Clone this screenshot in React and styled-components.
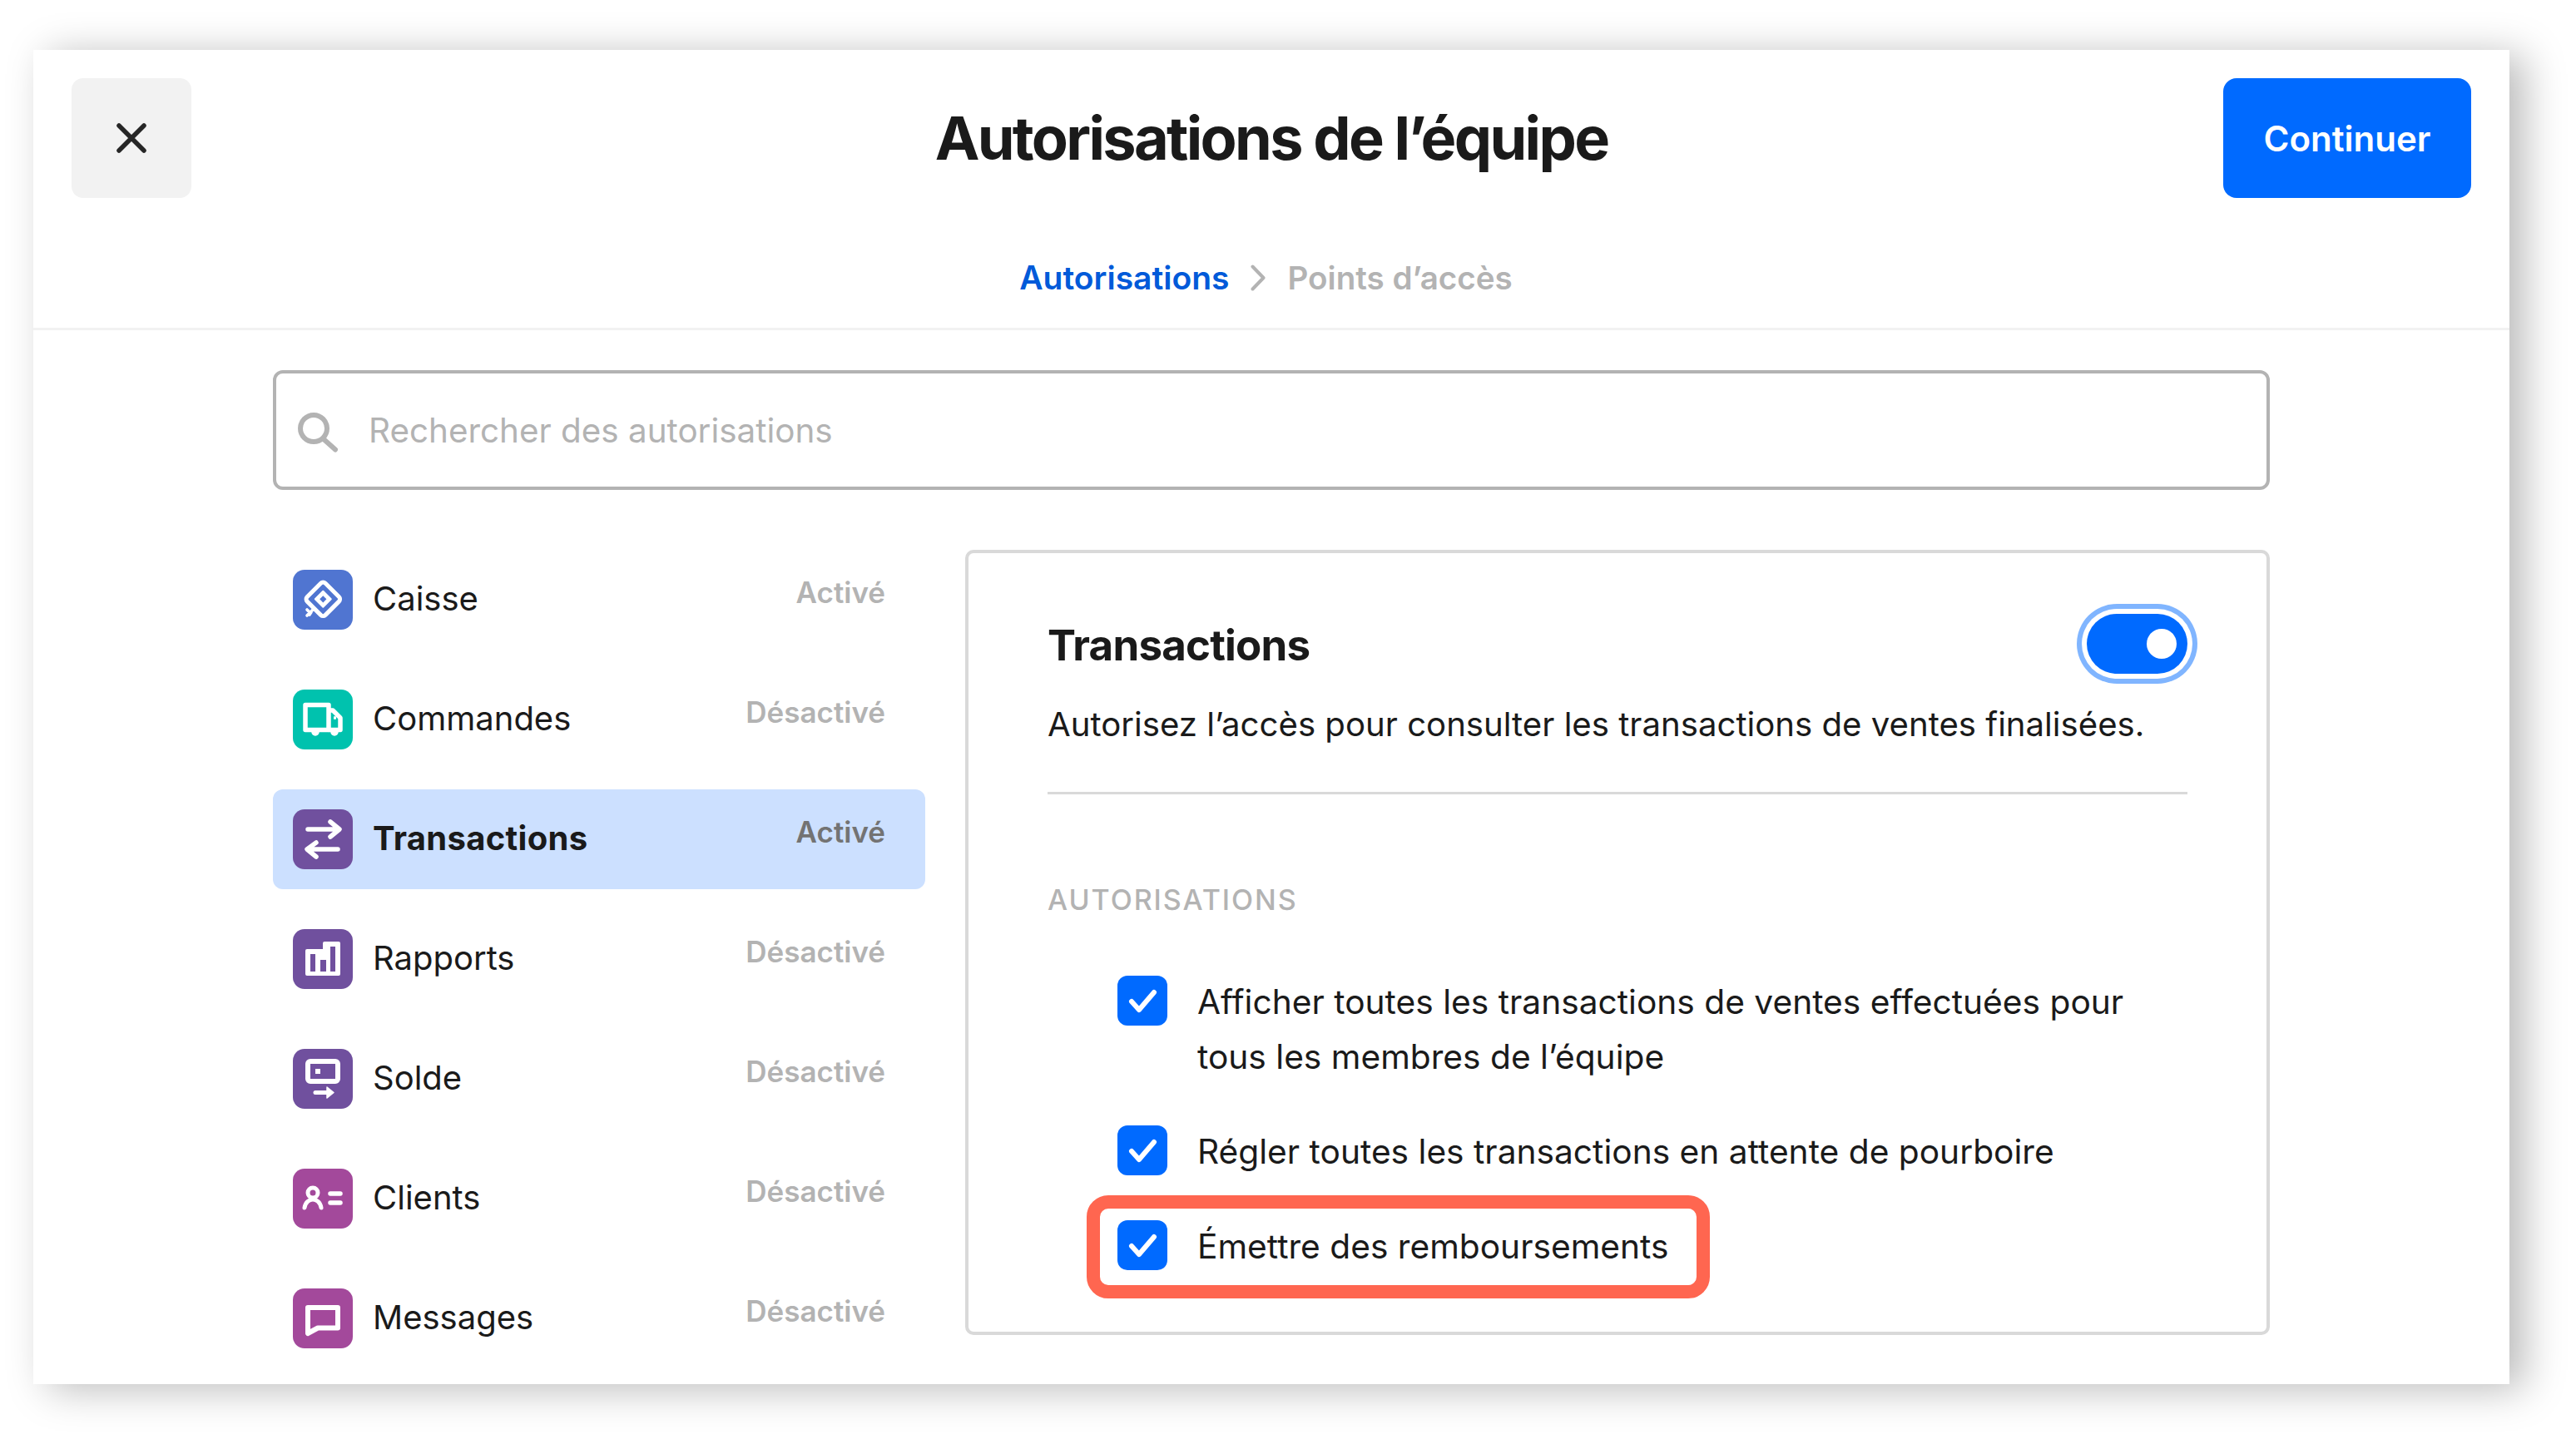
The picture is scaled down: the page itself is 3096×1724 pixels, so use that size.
import { createGlobalStyle, styled } from "styled-components";

const categories = [
  { id: "caisse", label: "Caisse", status: "Activé", color: "#5075d1", Icon: PosIcon },
  { id: "commandes", label: "Commandes", status: "Désactivé", color: "#00c2ae", Icon: TruckIcon },
  { id: "transactions", label: "Transactions", status: "Activé", color: "#70509e", Icon: SwapIcon, active: true },
  { id: "rapports", label: "Rapports", status: "Désactivé", color: "#70509e", Icon: ChartIcon },
  { id: "solde", label: "Solde", status: "Désactivé", color: "#70509e", Icon: BalanceIcon },
  { id: "clients", label: "Clients", status: "Désactivé", color: "#a3499b", Icon: ClientIcon },
  { id: "messages", label: "Messages", status: "Désactivé", color: "#a3499b", Icon: MessageIcon },
];

function PosIcon() {
  return (
    <svg viewBox="0 0 72 72" fill="none" stroke="#fff">
      <g transform="rotate(45 36.3 35.3)">
        <rect x="20.8" y="19.8" width="31" height="31" rx="4" strokeWidth="5" />
        <rect x="28.6" y="27.6" width="15.4" height="15.4" rx="1" fill="#fff" stroke="none" />
        <rect x="33.4" y="32.4" width="5.8" height="5.8" fill="#5075d1" stroke="none" />
      </g>
      <path d="M25 47l-8 8M17 48l3 3M22 51l-2 3" strokeWidth="3.6" strokeLinecap="round" />
    </svg>
  );
}

function TruckIcon() {
  return (
    <svg viewBox="0 0 72 72" fill="none" stroke="#fff" strokeWidth="5.5" strokeLinejoin="round">
      <path d="M15 18.5H43V48.5H15Z" />
      <path d="M43 25H48L57 34V48.5H43" />
      <path d="M23 51a4 4 0 0 0 8 0ZM46 51a4 4 0 0 0 8 0Z" fill="#fff" strokeWidth="1.5" />
      <path d="M49 34h3" strokeWidth="3.5" />
    </svg>
  );
}

function SwapIcon() {
  return (
    <svg viewBox="0 0 72 72" fill="none" stroke="#fff" strokeWidth="5.5" strokeLinecap="round" strokeLinejoin="round">
      <path d="M18 24H55M45 15L56 24L45 33" />
      <path d="M54 48H18M28 40L17 48L28 57" />
    </svg>
  );
}

function ChartIcon() {
  return (
    <svg viewBox="0 0 72 72">
      <path d="M17 24H36V17a2 2 0 0 1 2-2H55a2 2 0 0 1 2 2V54a2 2 0 0 1-2 2H17a2 2 0 0 1-2-2V26a2 2 0 0 1 2-2Z" fill="#fff" />
      <path d="M21 30H27V51H21ZM33 37H40V51H33ZM45 21H51V51H45Z" fill="#70509e" />
    </svg>
  );
}

function BalanceIcon() {
  return (
    <svg viewBox="0 0 72 72" fill="none">
      <rect x="18" y="15" width="36" height="24" rx="3" stroke="#fff" strokeWidth="6" />
      <rect x="27" y="24" width="6" height="6" fill="#fff" />
      <path d="M27 52.5H44" stroke="#fff" strokeWidth="5" strokeLinecap="round" />
      <path d="M41 46L49 52.5L41 59Z" fill="#fff" stroke="#fff" strokeWidth="1.5" strokeLinejoin="round" />
    </svg>
  );
}

function ClientIcon() {
  return (
    <svg viewBox="0 0 72 72" fill="none" stroke="#fff" strokeLinecap="round">
      <circle cx="24" cy="29" r="6" strokeWidth="5" />
      <path d="M14 47C15 40 20 37 24 37C28 37 33 40 34 47" strokeWidth="5" />
      <path d="M45 30H57M45 41H57" strokeWidth="5.5" />
    </svg>
  );
}

function MessageIcon() {
  return (
    <svg viewBox="0 0 72 72" fill="none" stroke="#fff" strokeWidth="6" strokeLinejoin="round">
      <path d="M18 23H54V47.5H30L18 54Z" />
    </svg>
  );
}

function CheckBox() {
  return (
    <Check>
      <svg viewBox="0 0 60 60" fill="none" stroke="#fff" strokeWidth="6" strokeLinecap="round" strokeLinejoin="round">
        <path d="M17 31L26 41L44 20" />
      </svg>
    </Check>
  );
}

export default function App() {
  return (
    <>
      <GlobalStyle />
      <Page>
        <Panel>
          <Header>
            <TopRow>
              <CloseButton aria-label="Fermer">
                <svg viewBox="0 0 36 36" fill="none" stroke="#262626" strokeWidth="5.5" strokeLinecap="round">
                  <path d="M3 3L33 33M33 3L3 33" />
                </svg>
              </CloseButton>
              <Title>Autorisations de l’équipe</Title>
              <ContinueButton>Continuer</ContinueButton>
            </TopRow>
            <Breadcrumb>
              <CrumbActive>Autorisations</CrumbActive>
              <svg width="18" height="32" viewBox="0 0 18 32" fill="none" stroke="#b3b3b3" strokeWidth="4" strokeLinecap="round" strokeLinejoin="round">
                <path d="M2.5 2.5L15.5 16L2.5 29.5" />
              </svg>
              <Crumb>Points d’accès</Crumb>
            </Breadcrumb>
          </Header>

          <Body>
            <SearchBar>
              <SearchIcon width="48" height="48" viewBox="0 0 48 48" fill="none" stroke="#b3b3b3" strokeWidth="6" strokeLinecap="round">
                <circle cx="19" cy="19" r="16" />
                <path d="M31 32L45 44.5" />
              </SearchIcon>
              <SearchText>Rechercher des autorisations</SearchText>
            </SearchBar>

            <Columns>
              <Sidebar>
                {categories.map(({ id, label, status, color, Icon, active }) => (
                  <NavRow key={id} $active={active}>
                    <NavIcon $color={color}>
                      <Icon />
                    </NavIcon>
                    <NavLabel $active={active}>{label}</NavLabel>
                    <NavStatus $active={active}>{status}</NavStatus>
                  </NavRow>
                ))}
              </Sidebar>

              <Card>
                <CardHead>
                  <CardTitle>Transactions</CardTitle>
                  <Toggle>
                    <Knob />
                  </Toggle>
                </CardHead>
                <CardText>Autorisez l’accès pour consulter les transactions de ventes finalisées.</CardText>
                <Rule />
                <SectionLabel>Autorisations</SectionLabel>
                <Options>
                  <Option>
                    <CheckBox />
                    <OptionText>
                      Afficher toutes les transactions de ventes effectuées pour
                      <br />
                      tous les membres de l’équipe
                    </OptionText>
                  </Option>
                  <Option>
                    <CheckBox />
                    <OptionText>Régler toutes les transactions en attente de pourboire</OptionText>
                  </Option>
                  <Option $highlighted>
                    <CheckBox />
                    <OptionText>Émettre des remboursements</OptionText>
                  </Option>
                </Options>
              </Card>
            </Columns>
          </Body>
        </Panel>
      </Page>
    </>
  );
}

const GlobalStyle = createGlobalStyle`
  html, body {
    margin: 0;
    background: #fff;
    overflow: hidden;
  }

  body {
    font-family: Inter, "Liberation Sans", sans-serif;
    color: #1a1a1a;
  }

  * {
    box-sizing: border-box;
  }
`;

const Page = styled.div`
  width: 3096px;
  height: 1724px;
  padding: 60px 80px 60px 40px;
`;

const Panel = styled.div`
  width: 2976px;
  height: 1604px;
  background: #fff;
  box-shadow: 18px 6px 46px rgba(0, 0, 0, 0.27);
`;

const Header = styled.header`
  height: 337px;
  padding: 34px 46px 0;
  border-bottom: 3px solid #f2f2f2;
`;

const TopRow = styled.div`
  display: grid;
  grid-template-columns: 1fr auto 1fr;
  align-items: center;
`;

const CloseButton = styled.button`
  display: flex;
  align-items: center;
  justify-content: center;
  width: 144px;
  height: 144px;
  padding: 0;
  border: 0;
  border-radius: 14px;
  background: #f2f2f2;

  svg {
    width: 36px;
    height: 36px;
  }
`;

const Title = styled.h1`
  margin: 0;
  font-size: 72px;
  line-height: 88px;
  font-weight: 700;
  letter-spacing: -2.68px;
  color: #1a1a1a;
`;

const ContinueButton = styled.button`
  justify-self: end;
  width: 298px;
  height: 144px;
  padding: 0;
  border: 0;
  border-radius: 16px;
  background: #006aff;
  color: #fff;
  font-family: inherit;
  font-size: 42px;
  font-weight: 600;
`;

const Breadcrumb = styled.nav`
  display: flex;
  align-items: center;
  justify-content: center;
  gap: 26px;
  margin: 72px 0 0 -13px;
  line-height: 48px;
  font-weight: 600;
`;

const CrumbActive = styled.span`
  font-size: 39px;
  color: #005ad9;
`;

const Crumb = styled.span`
  font-size: 38.6px;
  color: #b3b3b3;
`;

const Body = styled.main`
  padding: 48px 288px 0;
`;

const SearchBar = styled.div`
  display: flex;
  align-items: center;
  gap: 37px;
  height: 144px;
  padding: 0 0 0 26px;
  border: 4px solid #b3b3b3;
  border-radius: 12px;
`;

const SearchIcon = styled.svg`
  flex: none;
  margin-top: 6px;
`;

const SearchText = styled.span`
  font-size: 40.4px;
  color: #b3b3b3;
`;

const Columns = styled.div`
  display: grid;
  grid-template-columns: 784px 1568px;
  gap: 48px;
  margin-top: 72px;
`;

const Sidebar = styled.ul`
  display: flex;
  flex-direction: column;
  gap: 24px;
  margin: 0;
  padding: 0;
  list-style: none;
`;

const NavRow = styled.li`
  display: flex;
  align-items: center;
  height: 120px;
  padding: 0 48px 0 24px;
  border-radius: 12px;
  background: ${(p) => (p.$active ? "#cce0ff" : "transparent")};
`;

const NavIcon = styled.span`
  flex: none;
  width: 72px;
  height: 72px;
  border-radius: 14px;
  background: ${(p) => p.$color};

  svg {
    display: block;
    width: 72px;
    height: 72px;
  }
`;

const NavLabel = styled.span`
  flex: 1;
  margin: 0 0 4px 24px;
  font-size: 40px;
  font-weight: ${(p) => (p.$active ? 700 : 400)};
  letter-spacing: ${(p) => (p.$active ? "0.3px" : "0")};
  color: #1a1a1a;
`;

const NavStatus = styled.span`
  margin-bottom: 18px;
  font-size: 35px;
  font-weight: 600;
  color: ${(p) => (p.$active ? "#737373" : "#b3b3b3")};
`;

const Card = styled.section`
  height: 944px;
  padding: 73px 95px 0;
  border: 4px solid #d9d9d9;
  border-radius: 10px;
`;

const CardHead = styled.div`
  display: flex;
  align-items: center;
  justify-content: space-between;
  height: 72px;
`;

const CardTitle = styled.h2`
  margin: 3px 0 0;
  font-size: 51px;
  font-weight: 700;
  letter-spacing: -0.8px;
  color: #1a1a1a;
`;

const Toggle = styled.div`
  display: flex;
  align-items: center;
  justify-content: flex-end;
  width: 121px;
  height: 72px;
  padding-right: 13px;
  border-radius: 36px;
  background: #006aff;
  box-shadow: 0 0 0 6px #fff, 0 0 0 12px #80b5ff;
`;

const Knob = styled.div`
  width: 36px;
  height: 36px;
  border-radius: 50%;
  background: #fff;
`;

const CardText = styled.p`
  margin: 31px 0 0;
  font-size: 40.15px;
  line-height: 60px;
  color: #1a1a1a;
`;

const Rule = styled.hr`
  margin: 51px 0 0;
  height: 3px;
  border: 0;
  background: #d9d9d9;
`;

const SectionLabel = styled.h3`
  margin: 107px 0 0;
  font-size: 34px;
  line-height: 40px;
  font-weight: 500;
  letter-spacing: 1.95px;
  text-transform: uppercase;
  color: #b3b3b3;
`;

const Options = styled.div`
  display: flex;
  flex-direction: column;
  align-items: flex-start;
  gap: 48px;
  margin-top: 70px;
  padding-left: 84px;
`;

const Option = styled.label`
  position: relative;
  display: flex;
  gap: 36px;

  ${(p) =>
    p.$highlighted &&
    `
    &::after {
      content: "";
      position: absolute;
      inset: -29px -49px -29px -37px;
      border: 16px solid #ff6650;
      border-radius: 26px;
    }
  `}
`;

const Check = styled.span`
  flex: none;
  width: 60px;
  height: 60px;
  margin-top: 1px;
  border-radius: 12px;
  background: #006aff;

  svg {
    display: block;
    width: 60px;
    height: 60px;
  }
`;

const OptionText = styled.span`
  font-size: 40.7px;
  line-height: 66px;
  color: #1a1a1a;
`;
